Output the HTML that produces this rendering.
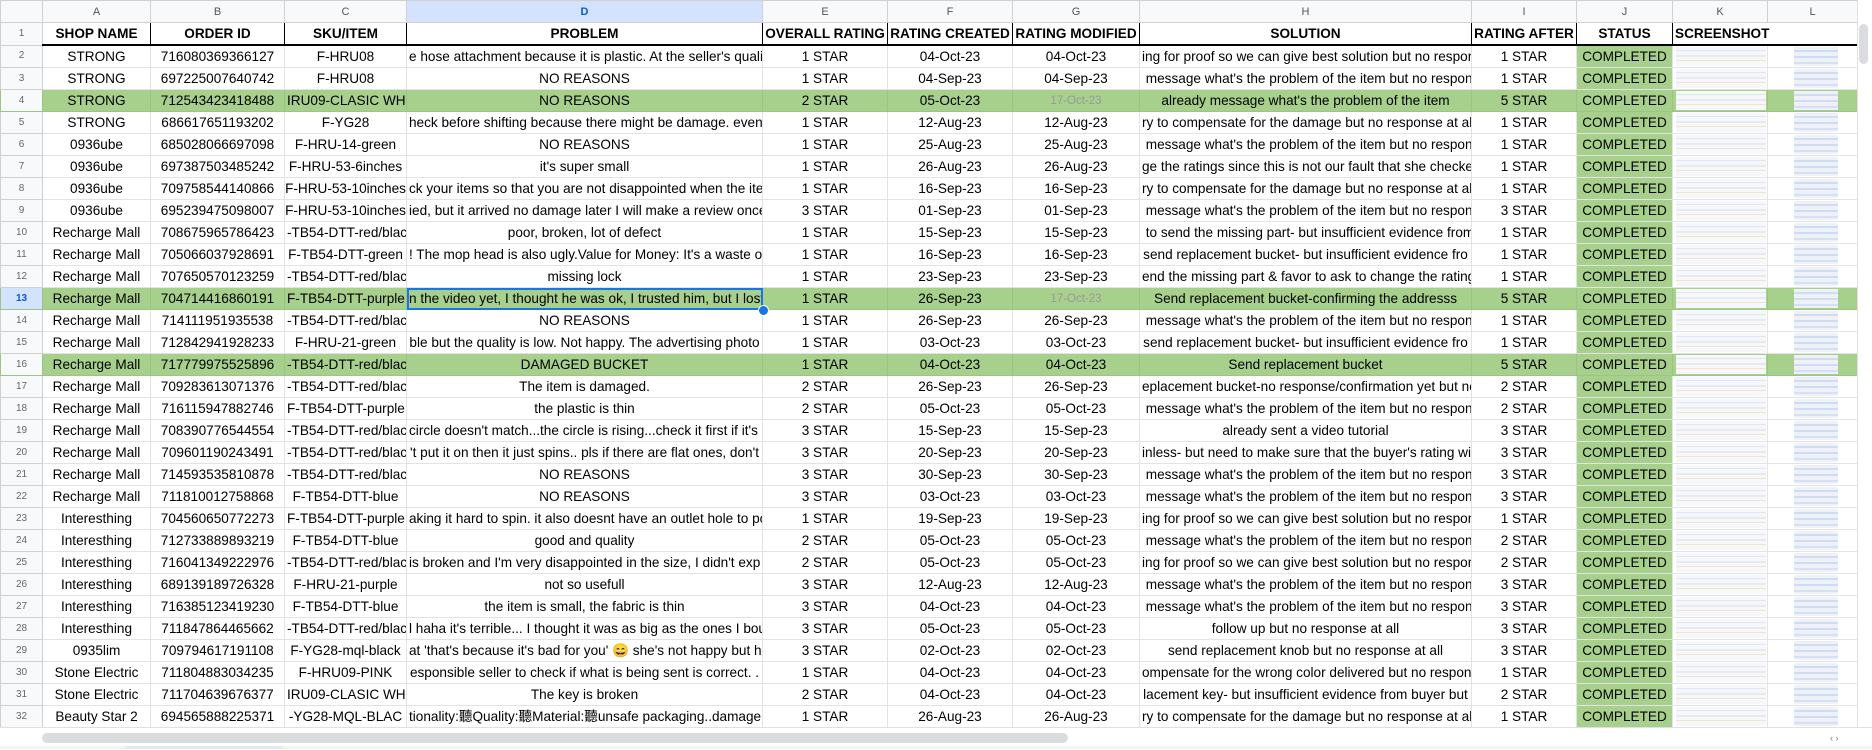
<!DOCTYPE html>
<html><head><meta charset="utf-8"><style>
body{margin:0;width:1872px;height:749px;overflow:hidden;background:#fff;font-family:"Liberation Sans",Arial,"Noto Sans CJK SC",sans-serif}
table{position:absolute;left:0;top:0;border-collapse:collapse;table-layout:fixed;width:1857px}
td{border:1px solid #e2e3e3;padding:0 2px;height:21px;font-size:13.6px;text-align:center;white-space:nowrap;overflow:hidden;color:#000;line-height:20px}
tr.h td{background:#f8f9fa;color:#555;font-size:11px;border-color:#d0d0d0;height:21px}
tr.h td.sd{background:#d3e3fd;color:#0b57d0;font-weight:bold}
td.n{background:#f8f9fa!important;color:#666;font-size:10px;border-color:#d0d0d0}
td.ns{background:#d3e3fd!important;color:#0b57d0;font-weight:bold}
tr.t td{font-weight:bold;border:1px solid #000;border-bottom:2px solid #000;height:21px;font-size:13.6px}
tr.t td.n{border:1px solid #d0d0d0;font-weight:normal;font-size:10px}
tr.g td{background-color:#a8d08d;border-color:#9cc483}
td.j{background-color:#a8d08d}
.gr{color:#999;font-size:11.5px}
.k{background-image:linear-gradient(transparent 3px,#dfe7f5 3px,#dfe7f5 4px,transparent 4px,transparent 8px,#e8eaee 8px,#e8eaee 10px,transparent 10px,transparent 13px,#f3e3c8 13px,#f3e3c8 14px,transparent 14px),linear-gradient(#f6f7fa,#f6f7fa);background-repeat:no-repeat;background-position:3px 1px,3px 1px;background-size:90px 19px,90px 19px}
.l{background-image:linear-gradient(transparent 3px,#cfdcf2 3px,#cfdcf2 5px,transparent 5px,transparent 9px,#cfdcf2 9px,#cfdcf2 11px,transparent 11px,transparent 15px,#d6e0f2 15px,#d6e0f2 17px,transparent 17px),linear-gradient(#eef1f7,#eef1f7);background-repeat:no-repeat;background-position:26px 1px,26px 1px;background-size:44px 19px,44px 19px}
.sel{outline:2px solid #1a73e8;outline-offset:-2px}
</style></head><body>
<table>
<colgroup><col style="width:42px"><col style="width:108px"><col style="width:134px"><col style="width:122px"><col style="width:356px"><col style="width:125px"><col style="width:125px"><col style="width:127px"><col style="width:332px"><col style="width:105px"><col style="width:96px"><col style="width:95px"><col style="width:90px"></colgroup>
<tr class="h"><td></td><td>A</td><td>B</td><td>C</td><td class="sd">D</td><td>E</td><td>F</td><td>G</td><td>H</td><td>I</td><td>J</td><td>K</td><td>L</td></tr>
<tr class="t"><td class="n">1</td><td>SHOP NAME</td><td>ORDER ID</td><td>SKU/ITEM</td><td>PROBLEM</td><td>OVERALL RATING</td><td>RATING CREATED</td><td>RATING MODIFIED</td><td>SOLUTION</td><td>RATING AFTER</td><td>STATUS</td><td colspan="2" style="text-align:left;border-right:none">SCREENSHOT</td></tr>
<tr><td class="n">2</td><td>STRONG</td><td>716080369366127</td><td>F-HRU08</td><td>e hose attachment because it is plastic. At the seller's quali</td><td>1 STAR</td><td>04-Oct-23</td><td>04-Oct-23</td><td>ing for proof so we can give best solution but no respor</td><td>1 STAR</td><td class="j">COMPLETED</td><td class="k"></td><td class="l"></td></tr>
<tr><td class="n">3</td><td>STRONG</td><td>697225007640742</td><td>F-HRU08</td><td>NO REASONS</td><td>1 STAR</td><td>04-Sep-23</td><td>04-Sep-23</td><td>&nbsp;message what's the problem of the item but no respon</td><td>1 STAR</td><td class="j">COMPLETED</td><td class="k"></td><td class="l"></td></tr>
<tr class="g"><td class="n">4</td><td>STRONG</td><td>712543423418488</td><td>IRU09-CLASIC WH</td><td>NO REASONS</td><td>2 STAR</td><td>05-Oct-23</td><td><span class="gr">17-Oct-23</span></td><td>already message what's the problem of the item</td><td>5 STAR</td><td class="j">COMPLETED</td><td class="k"></td><td class="l"></td></tr>
<tr><td class="n">5</td><td>STRONG</td><td>686617651193202</td><td>F-YG28</td><td>heck before shifting because there might be damage. even</td><td>1 STAR</td><td>12-Aug-23</td><td>12-Aug-23</td><td>ry to compensate for the damage but no response at al</td><td>1 STAR</td><td class="j">COMPLETED</td><td class="k"></td><td class="l"></td></tr>
<tr><td class="n">6</td><td>0936ube</td><td>685028066697098</td><td>F-HRU-14-green</td><td>NO REASONS</td><td>1 STAR</td><td>25-Aug-23</td><td>25-Aug-23</td><td>&nbsp;message what's the problem of the item but no respon</td><td>1 STAR</td><td class="j">COMPLETED</td><td class="k"></td><td class="l"></td></tr>
<tr><td class="n">7</td><td>0936ube</td><td>697387503485242</td><td>F-HRU-53-6inches</td><td>it's super small</td><td>1 STAR</td><td>26-Aug-23</td><td>26-Aug-23</td><td>ge the ratings since this is not our fault that she checke</td><td>1 STAR</td><td class="j">COMPLETED</td><td class="k"></td><td class="l"></td></tr>
<tr><td class="n">8</td><td>0936ube</td><td>709758544140866</td><td style="padding:0">F-HRU-53-10inches</td><td>ck your items so that you are not disappointed when the ite</td><td>1 STAR</td><td>16-Sep-23</td><td>16-Sep-23</td><td>ry to compensate for the damage but no response at al</td><td>1 STAR</td><td class="j">COMPLETED</td><td class="k"></td><td class="l"></td></tr>
<tr><td class="n">9</td><td>0936ube</td><td>695239475098007</td><td style="padding:0">F-HRU-53-10inches</td><td>ied, but it arrived no damage later I will make a review once</td><td>3 STAR</td><td>01-Sep-23</td><td>01-Sep-23</td><td>&nbsp;message what's the problem of the item but no respon</td><td>3 STAR</td><td class="j">COMPLETED</td><td class="k"></td><td class="l"></td></tr>
<tr><td class="n">10</td><td>Recharge Mall</td><td>708675965786423</td><td>-TB54-DTT-red/blac</td><td>poor, broken, lot of defect</td><td>1 STAR</td><td>15-Sep-23</td><td>15-Sep-23</td><td>&nbsp;to send the missing part- but insufficient evidence from</td><td>1 STAR</td><td class="j">COMPLETED</td><td class="k"></td><td class="l"></td></tr>
<tr><td class="n">11</td><td>Recharge Mall</td><td>705066037928691</td><td>F-TB54-DTT-green</td><td>! The mop head is also ugly.Value for Money: It's a waste o</td><td>1 STAR</td><td>16-Sep-23</td><td>16-Sep-23</td><td>send replacement bucket- but insufficient evidence fro</td><td>1 STAR</td><td class="j">COMPLETED</td><td class="k"></td><td class="l"></td></tr>
<tr><td class="n">12</td><td>Recharge Mall</td><td>707650570123259</td><td>-TB54-DTT-red/blac</td><td>missing lock</td><td>1 STAR</td><td>23-Sep-23</td><td>23-Sep-23</td><td>end the missing part &amp; favor to ask to change the rating</td><td>1 STAR</td><td class="j">COMPLETED</td><td class="k"></td><td class="l"></td></tr>
<tr class="g"><td class="n ns">13</td><td>Recharge Mall</td><td>704714416860191</td><td>F-TB54-DTT-purple</td><td class="sel">n the video yet, I thought he was ok, I trusted him, but I lost</td><td>1 STAR</td><td>26-Sep-23</td><td><span class="gr">17-Oct-23</span></td><td>Send replacement bucket-confirming the addresss</td><td>5 STAR</td><td class="j">COMPLETED</td><td class="k"></td><td class="l"></td></tr>
<tr><td class="n">14</td><td>Recharge Mall</td><td>714111951935538</td><td>-TB54-DTT-red/blac</td><td>NO REASONS</td><td>1 STAR</td><td>26-Sep-23</td><td>26-Sep-23</td><td>&nbsp;message what's the problem of the item but no respon</td><td>1 STAR</td><td class="j">COMPLETED</td><td class="k"></td><td class="l"></td></tr>
<tr><td class="n">15</td><td>Recharge Mall</td><td>712842941928233</td><td>F-HRU-21-green</td><td>ble but the quality is low. Not happy. The advertising photo</td><td>1 STAR</td><td>03-Oct-23</td><td>03-Oct-23</td><td>send replacement bucket- but insufficient evidence fro</td><td>1 STAR</td><td class="j">COMPLETED</td><td class="k"></td><td class="l"></td></tr>
<tr class="g"><td class="n">16</td><td>Recharge Mall</td><td>717779975525896</td><td>-TB54-DTT-red/blac</td><td>DAMAGED BUCKET</td><td>1 STAR</td><td>04-Oct-23</td><td>04-Oct-23</td><td>Send replacement bucket</td><td>5 STAR</td><td class="j">COMPLETED</td><td class="k"></td><td class="l"></td></tr>
<tr><td class="n">17</td><td>Recharge Mall</td><td>709283613071376</td><td>-TB54-DTT-red/blac</td><td>The item is damaged.</td><td>2 STAR</td><td>26-Sep-23</td><td>26-Sep-23</td><td>eplacement bucket-no response/confirmation yet but nc</td><td>2 STAR</td><td class="j">COMPLETED</td><td class="k"></td><td class="l"></td></tr>
<tr><td class="n">18</td><td>Recharge Mall</td><td>716115947882746</td><td>F-TB54-DTT-purple</td><td>the plastic is thin</td><td>2 STAR</td><td>05-Oct-23</td><td>05-Oct-23</td><td>&nbsp;message what's the problem of the item but no respon</td><td>2 STAR</td><td class="j">COMPLETED</td><td class="k"></td><td class="l"></td></tr>
<tr><td class="n">19</td><td>Recharge Mall</td><td>708390776544554</td><td>-TB54-DTT-red/blac</td><td>circle doesn't match...the circle is rising...check it first if it's i</td><td>3 STAR</td><td>15-Sep-23</td><td>15-Sep-23</td><td>already sent a video tutorial</td><td>3 STAR</td><td class="j">COMPLETED</td><td class="k"></td><td class="l"></td></tr>
<tr><td class="n">20</td><td>Recharge Mall</td><td>709601190243491</td><td>-TB54-DTT-red/blac</td><td>'t put it on then it just spins.. pls if there are flat ones, don't</td><td>3 STAR</td><td>20-Sep-23</td><td>20-Sep-23</td><td>inless- but need to make sure that the buyer's rating wi</td><td>3 STAR</td><td class="j">COMPLETED</td><td class="k"></td><td class="l"></td></tr>
<tr><td class="n">21</td><td>Recharge Mall</td><td>714593535810878</td><td>-TB54-DTT-red/blac</td><td>NO REASONS</td><td>3 STAR</td><td>30-Sep-23</td><td>30-Sep-23</td><td>&nbsp;message what's the problem of the item but no respon</td><td>3 STAR</td><td class="j">COMPLETED</td><td class="k"></td><td class="l"></td></tr>
<tr><td class="n">22</td><td>Recharge Mall</td><td>711810012758868</td><td>F-TB54-DTT-blue</td><td>NO REASONS</td><td>3 STAR</td><td>03-Oct-23</td><td>03-Oct-23</td><td>&nbsp;message what's the problem of the item but no respon</td><td>3 STAR</td><td class="j">COMPLETED</td><td class="k"></td><td class="l"></td></tr>
<tr><td class="n">23</td><td>Interesthing</td><td>704560650772273</td><td>F-TB54-DTT-purple</td><td>aking it hard to spin. it also doesnt have an outlet hole to pc</td><td>1 STAR</td><td>19-Sep-23</td><td>19-Sep-23</td><td>ing for proof so we can give best solution but no respor</td><td>1 STAR</td><td class="j">COMPLETED</td><td class="k"></td><td class="l"></td></tr>
<tr><td class="n">24</td><td>Interesthing</td><td>712733889893219</td><td>F-TB54-DTT-blue</td><td>good and quality</td><td>2 STAR</td><td>05-Oct-23</td><td>05-Oct-23</td><td>&nbsp;message what's the problem of the item but no respon</td><td>2 STAR</td><td class="j">COMPLETED</td><td class="k"></td><td class="l"></td></tr>
<tr><td class="n">25</td><td>Interesthing</td><td>716041349222976</td><td>-TB54-DTT-red/blac</td><td>is broken and I'm very disappointed in the size, I didn't exp</td><td>2 STAR</td><td>05-Oct-23</td><td>05-Oct-23</td><td>ing for proof so we can give best solution but no respor</td><td>2 STAR</td><td class="j">COMPLETED</td><td class="k"></td><td class="l"></td></tr>
<tr><td class="n">26</td><td>Interesthing</td><td>689139189726328</td><td>F-HRU-21-purple</td><td>not so usefull</td><td>3 STAR</td><td>12-Aug-23</td><td>12-Aug-23</td><td>&nbsp;message what's the problem of the item but no respon</td><td>3 STAR</td><td class="j">COMPLETED</td><td class="k"></td><td class="l"></td></tr>
<tr><td class="n">27</td><td>Interesthing</td><td>716385123419230</td><td>F-TB54-DTT-blue</td><td>the item is small, the fabric is thin</td><td>3 STAR</td><td>04-Oct-23</td><td>04-Oct-23</td><td>&nbsp;message what's the problem of the item but no respon</td><td>3 STAR</td><td class="j">COMPLETED</td><td class="k"></td><td class="l"></td></tr>
<tr><td class="n">28</td><td>Interesthing</td><td>711847864465662</td><td>-TB54-DTT-red/blac</td><td>l haha it's terrible... I thought it was as big as the ones I bou</td><td>3 STAR</td><td>05-Oct-23</td><td>05-Oct-23</td><td>follow up but no response at all</td><td>3 STAR</td><td class="j">COMPLETED</td><td class="k"></td><td class="l"></td></tr>
<tr><td class="n">29</td><td>0935lim</td><td>709794617191108</td><td>F-YG28-mql-black</td><td>at 'that's because it's bad for you' <span style="color:#e8a200">😄</span> she's not happy but h</td><td>3 STAR</td><td>02-Oct-23</td><td>02-Oct-23</td><td>send replacement knob but no response at all</td><td>3 STAR</td><td class="j">COMPLETED</td><td class="k"></td><td class="l"></td></tr>
<tr><td class="n">30</td><td>Stone Electric</td><td>711804883034235</td><td>F-HRU09-PINK</td><td>esponsible seller to check if what is being sent is correct. .</td><td>1 STAR</td><td>04-Oct-23</td><td>04-Oct-23</td><td>ompensate for the wrong color delivered but no respons</td><td>1 STAR</td><td class="j">COMPLETED</td><td class="k"></td><td class="l"></td></tr>
<tr><td class="n">31</td><td>Stone Electric</td><td>711704639676377</td><td>IRU09-CLASIC WH</td><td>The key is broken</td><td>2 STAR</td><td>04-Oct-23</td><td>04-Oct-23</td><td>lacement key- but insufficient evidence from buyer but</td><td>2 STAR</td><td class="j">COMPLETED</td><td class="k"></td><td class="l"></td></tr>
<tr><td class="n">32</td><td>Beauty Star 2</td><td>694565888225371</td><td>-YG28-MQL-BLAC</td><td>tionality:聽Quality:聽Material:聽unsafe packaging..damage</td><td>1 STAR</td><td>26-Aug-23</td><td>26-Aug-23</td><td>ry to compensate for the damage but no response at al</td><td>1 STAR</td><td class="j">COMPLETED</td><td class="k"></td><td class="l"></td></tr>
</table>
<div style="position:absolute;left:758px;top:305px;width:9px;height:9px;border-radius:50%;background:#1a73e8;border:1px solid #fff"></div>
<div style="position:absolute;left:1857px;top:0;width:15px;height:727px;background:#fff;border-left:1px solid #e0e0e0"></div>
<div style="position:absolute;left:1859px;top:24px;width:9px;height:40px;background:#dadce0;border-radius:5px"></div>
<div style="position:absolute;left:0;top:727px;width:1872px;height:22px;background:#fff;border-top:1px solid #e0e0e0"></div>
<div style="position:absolute;left:42px;top:733px;width:1026px;height:10px;background:#dadce0;border-radius:5px"></div>
<div style="position:absolute;left:0;top:746px;width:1872px;height:3px;background:#f1f3f4"></div>
<div style="position:absolute;left:125px;top:746px;width:158px;height:3px;background:#e1e9f7"></div>
<div style="position:absolute;left:1830px;top:733px;font-size:9px;color:#777">&#8249; &#8250;</div>
</body></html>
